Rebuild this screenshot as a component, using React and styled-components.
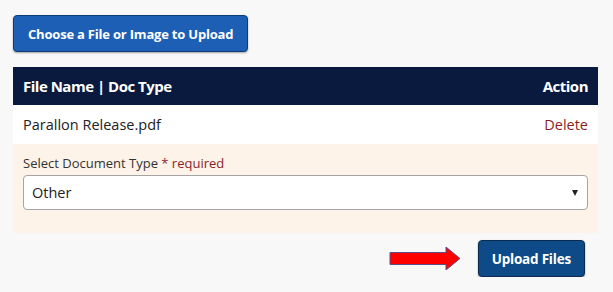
import React from 'react';
import styled, { createGlobalStyle } from 'styled-components';

const Global = createGlobalStyle`
    html, body {
        margin: 0;
        background: #f8f8f8;
        font-family: "Open Sans", "Noto Sans", sans-serif;
    }
`;

const Page = styled.div`
    display: flex;
    flex-direction: column;
    align-items: flex-start;
    width: 585px;
    padding: 15px 0 0 13px;
`;

const Button = styled.button`
    box-sizing: border-box;
    height: 37px;
    padding: 0 ${p => p.$pad || 14}px;
    background: ${p => p.$bg};
    border: 1px solid ${p => p.$border};
    border-radius: 4px;
    color: #fff;
    font-family: inherit;
    font-weight: 700;
    font-size: ${p => p.$size || 13.5}px;
    letter-spacing: -0.2px;
    box-shadow: 0 1px 2px rgba(0, 0, 0, 0.35);
    cursor: pointer;
`;

const Table = styled.div`
    width: 100%;
    margin-top: 15px;
`;

const Row = styled.div`
    box-sizing: border-box;
    display: flex;
    justify-content: space-between;
    align-items: center;
    height: ${p => p.$h}px;
    padding: 0 10px;
    background: ${p => p.$bg};
    color: ${p => p.$color || '#222'};
    font-size: ${p => p.$size || 14.5}px;
    font-weight: ${p => p.$weight || 400};
    letter-spacing: ${p => p.$weight ? '-0.5px' : '0'};
`;

const DeleteLink = styled.span`
    color: #8a1f1f;
`;

const Panel = styled.div`
    box-sizing: border-box;
    height: 89px;
    padding: 10px 10px 0;
    background: #fdf3e8;
`;

const Label = styled.div`
    font-size: 13px;
    color: #333;
    margin-bottom: 3px;
`;

const Required = styled.span`
    color: #8a1f2f;
`;

const Select = styled.div`
    box-sizing: border-box;
    display: flex;
    justify-content: space-between;
    align-items: center;
    height: 35px;
    padding: 0 9px 0 8px;
    background: #fff;
    border: 1px solid #a4a4a4;
    border-radius: 4px;
    font-size: 14.5px;
    color: #222;
`;

const Caret = styled.span`
    width: 0;
    height: 0;
    border-left: 3.5px solid transparent;
    border-right: 3.5px solid transparent;
    border-top: 6px solid #222;
`;

const Footer = styled.div`
    display: flex;
    align-items: center;
    justify-content: flex-end;
    gap: 17px;
    width: 100%;
    margin-top: 7px;
    padding-right: 13px;
    box-sizing: border-box;
`;

const Arrow = () => (
    <svg width="72" height="25" viewBox="0 0 72 25">
        <path d="M1 6.5 H57 V1 L71 12.5 L57 24 V18.5 H1 Z" fill="#ff0000" stroke="#5a4f8a" strokeWidth="1" />
    </svg>
);

export default function App() {
    return <>
        <Global />
        <Page>
            <Button $bg="#1d5fb5" $border="#0f3d7c" $size={13}>Choose a File or Image to Upload</Button>
            <Table>
                <Row $h={38} $bg="#0a1a3f" $color="#fff" $size={15} $weight={700}>
                    <span>File Name | Doc Type</span>
                    <span>Action</span>
                </Row>
                <Row $h={39} $bg="#fff">
                    <span>Parallon Release.pdf</span>
                    <DeleteLink>Delete</DeleteLink>
                </Row>
                <Panel>
                    <Label>Select Document Type <Required>* required</Required></Label>
                    <Select>
                        <span>Other</span>
                        <Caret />
                    </Select>
                </Panel>
            </Table>
            <Footer>
                <Arrow />
                <Button $bg="#0d4a87" $border="#0a2a4f" $pad={13}>Upload Files</Button>
            </Footer>
        </Page>
    </>;
}
